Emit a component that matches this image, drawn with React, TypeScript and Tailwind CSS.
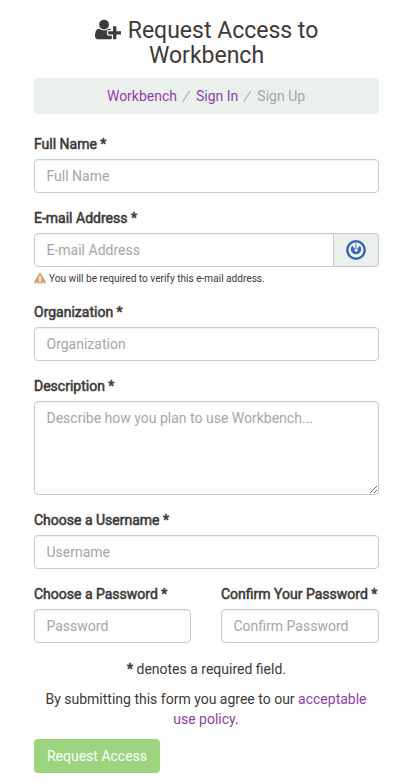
import React from 'react';
import { FaExclamationTriangle } from 'react-icons/fa';

const inputClass =
  'block h-[34px] w-full min-w-0 rounded border border-[#cacccb] bg-[#fdfefd] px-[11.5px] py-1.5 text-[14px] leading-5 text-[#3d3a37] placeholder:text-[#a5a7a9] placeholder:opacity-100 outline-none shadow-[inset_0_1px_1px_rgba(0,0,0,0.06)]';

const labelClass = 'mb-[5px] block whitespace-nowrap leading-5 [-webkit-text-stroke:0.55px_#3d3a37]';

function UserPlus() {
  return (
    <svg viewBox="0 0 2048 1792" className="inline-block h-[23px] w-[26.3px] align-[-3px]" fill="currentColor" aria-hidden="true">
      <path d="M704 896q-159 0-271.5-112.5t-112.5-271.5 112.5-271.5 271.5-112.5 271.5 112.5 112.5 271.5-112.5 271.5-271.5 112.5zm960 128h352q13 0 22.5 9.5t9.5 22.5v192q0 13-9.5 22.5t-22.5 9.5h-352v352q0 13-9.5 22.5t-22.5 9.5h-192q-13 0-22.5-9.5t-9.5-22.5v-352h-352q-13 0-22.5-9.5t-9.5-22.5v-192q0-13 9.5-22.5t22.5-9.5h352v-352q0-13 9.5-22.5t22.5-9.5h192q13 0 22.5 9.5t9.5 22.5v352zm-736 224q0 52 38 90t90 38h256v238q-68 50-171 50h-874q-121 0-194-69t-73-190q0-53 3.5-103.5t14-109 26.5-108.5 43-97.5 62-81 85.5-53.5 111.5-20q19 0 39 17 79 61 154.5 91.5t164.5 30.5 164.5-30.5 154.5-91.5q20-17 39-17 132 0 217 96h-223q-52 0-90 38t-38 90v192z" />
    </svg>
  );
}

function PowerBadge() {
  return (
    <svg viewBox="0 0 20 20" className="h-5 w-5" fill="none" aria-hidden="true">
      <circle cx="10" cy="10" r="8.7" fill="#f4f8fb" stroke="#3a66ae" strokeWidth="2.5" />
      <path d="M6.2 5.6a5.2 5.2 0 1 0 7.8.2l-3 3a1.6 1.6 0 1 1-2 .2z" fill="#3a66ae" />
      <path d="M9.8 3.3v6.2" stroke="#7fa9dc" strokeWidth="1.7" />
    </svg>
  );
}

function Slash() {
  return <span className="inline-block w-[19px] -skew-x-[14deg] text-center text-[#a5a7a9]">/</span>;
}

type FieldProps = { id: string; label: string; placeholder: string; type?: string };

function Field({ id, label, placeholder, type = 'text' }: FieldProps) {
  return (
    <div className="mb-[15px]">
      <label htmlFor={id} className={labelClass}>{label} *</label>
      <input id={id} type={type} placeholder={placeholder} className={inputClass} />
    </div>
  );
}

export default function App() {
  return (
    <main className="h-[783px] overflow-hidden bg-[#fdfefd] pt-[18px] pr-8 pl-[34px] font-['Roboto',sans-serif] text-[14px] leading-5 text-[#3d3a37]">
      <h1 className="mb-[9.4px] text-center text-[23px] leading-[25.3px]">
        <UserPlus /> <span className="ml-px">Request Access to</span><br />Workbench
      </h1>
      <nav className="mb-5 flex h-9 items-center justify-center rounded bg-[#ecf0ed] pr-px text-[#8e3fa9]">
        <a href="#">Workbench</a>
        <Slash />
        <a href="#">Sign In</a>
        <Slash />
        <span className="text-[#a5a7a9]">Sign Up</span>
      </nav>
      <form>
        <Field id="name" label="Full Name" placeholder="Full Name" />
        <div className="mb-[15px]">
          <label htmlFor="email" className={labelClass}>E-mail Address *</label>
          <div className="flex">
            <input id="email" type="email" placeholder="E-mail Address" className={`${inputClass} rounded-r-none`} />
            <span className="flex w-[45px] shrink-0 items-center justify-center rounded-r border border-l-0 border-[#cacccb] bg-[#ecf0ed]">
              <PowerBadge />
            </span>
          </div>
          <p className="flex h-5 items-center gap-[3px] pt-[3px] text-[10.1px] leading-[15px]">
            <FaExclamationTriangle className="text-[12px] text-[#dca67b]" />
            You will be required to verify this e-mail address.
          </p>
        </div>
        <Field id="organization" label="Organization" placeholder="Organization" />
        <div className="mb-[15px]">
          <label htmlFor="description" className={labelClass}>Description *</label>
          <textarea id="description" placeholder="Describe how you plan to use Workbench..." className={`${inputClass} h-[94px] resize`} />
        </div>
        <Field id="username" label="Choose a Username" placeholder="Username" />
        <div className="mb-px grid grid-cols-[157px_158px] gap-[30px]">
          <Field id="password" label="Choose a Password" placeholder="Password" type="password" />
          <Field id="confirm" label="Confirm Your Password" placeholder="Confirm Password" type="password" />
        </div>
        <p className="mb-2.5 text-center"><span className="[-webkit-text-stroke:0.55px_#3d3a37]">*</span> denotes a required field.</p>
        <p className="mb-2.5 pr-px text-center">By submitting this form you agree to our <a href="#" className="text-[#8e3fa9]">acceptable use policy</a>.</p>
        <button type="button" className="h-[34px] w-[126px] rounded bg-[#9cd47f] whitespace-nowrap text-white">Request Access</button>
      </form>
    </main>
  );
}
